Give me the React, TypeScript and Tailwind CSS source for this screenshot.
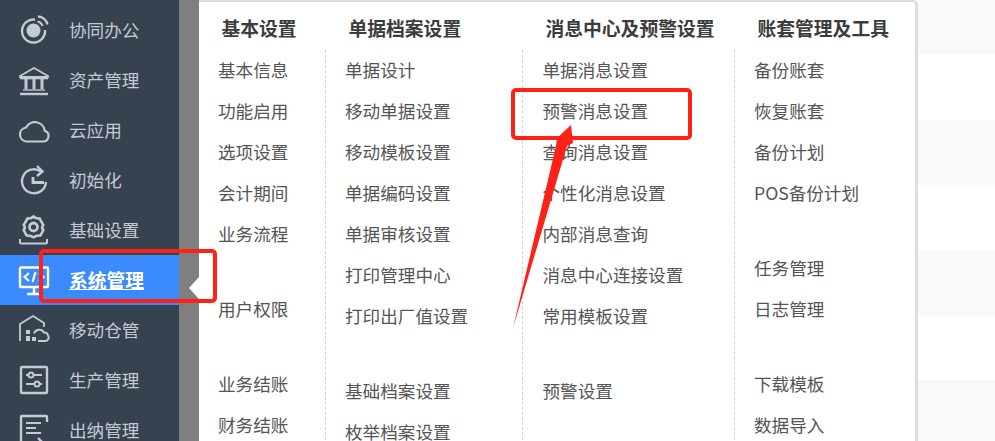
import React from 'react';

const FONT = "font-['Microsoft_YaHei','Noto_Sans_CJK_SC','Noto_Sans',sans-serif]";

const IconBox: React.FC<{ children: React.ReactNode }> = ({ children }) => (
  <svg viewBox="0 0 32 32" fill="none" stroke="currentColor" strokeWidth="2" className="w-8 h-8 shrink-0">
    {children}
  </svg>
);

const icons: Record<string, React.ReactNode> = {
  office: (
    <IconBox>
      <path d="M17 5.600A11.500 11.500 0 1 0 27 16" strokeWidth="2.400" />
      <circle cx="15.500" cy="16.500" r="7" fill="currentColor" stroke="none" />
      <path d="M20 2.500a10.500 10.500 0 0 1 9.500 8" strokeWidth="2.400" />
      <path d="M19.500 7.500a6 6 0 0 1 5 4.500" strokeWidth="2.200" />
    </IconBox>
  ),
  bank: (
    <IconBox>
      <path d="M2 12 16 4l14 8v1H2z" strokeWidth="1.800" />
      <path d="M2 14.500h28" strokeWidth="1.600" />
      <path d="M8 15v10M16 15v10M24 15v10" strokeWidth="3" />
      <path d="M5 26h22" strokeWidth="1.400" />
      <path d="M2 30h28" strokeWidth="2.400" />
    </IconBox>
  ),
  cloud: (
    <IconBox>
      <path d="M8 27.500h17a5.500 5.500 0 0 0 1.800-10.700A10 10 0 0 0 8 13.500a7 7 0 0 0-6 7 7 7 0 0 0 6 7z" strokeWidth="2.200" />
    </IconBox>
  ),
  init: (
    <IconBox>
      <path d="M23 7.500A12 12 0 1 0 28 18" strokeWidth="2.400" />
      <path d="M19 2l5.500 5.500L19 12" strokeWidth="2.400" />
      <path d="M15 13v5.500h11" strokeWidth="2.800" />
    </IconBox>
  ),
  base: (
    <IconBox>
      <path d="M15.500 2.500c1.800 1.800 3.200 2.300 6 2l3.800 6.500c-1.600 1.800-1.600 3.200 0 5l-2.800 5.500c-2.600-.2-4.800.2-7 1.800-2.200-1.600-4.400-2-7-1.800l-2.800-5.500c1.600-1.800 1.600-3.200 0-5l3.800-6.500c2.800.3 4.200-.2 6-2z" strokeWidth="2.600" />
      <circle cx="15.500" cy="13" r="4" strokeWidth="2.800" />
      <path d="M2 25v3.500a1 1 0 0 0 1 1h25a1 1 0 0 0 1-1V25" strokeWidth="2" />
    </IconBox>
  ),
  system: (
    <IconBox>
      <rect x="2" y="3.500" width="28" height="19.500" rx="1" strokeWidth="2.400" />
      <path d="M16 23v6M9 30h14" strokeWidth="2.400" />
      <path d="M11 9l-4.500 4 4.500 4M21 9l4.500 4-4.500 4M17.500 8l-3 10" strokeWidth="2.200" />
    </IconBox>
  ),
  warehouse: (
    <IconBox>
      <path d="M2 27V10L15 2l11 7v4" strokeWidth="1.800" />
      <path d="M8 16h4v4H8zM8 22h4v5H8zM14 23h4v4h-4z" fill="currentColor" stroke="none" />
      <path d="M20 27h7a3.500 3.500 0 0 0 3-5.500 3.500 3.500 0 0 0-4-3 5.500 5.500 0 0 0-10 1" strokeWidth="2" />
    </IconBox>
  ),
  production: (
    <IconBox>
      <rect x="3" y="3" width="26" height="26" rx="1" strokeWidth="2.400" />
      <path d="M8 11h16M8 20h16" strokeWidth="2" />
      <circle cx="13" cy="11" r="2.500" fill="#374250" strokeWidth="2" />
      <circle cx="19" cy="20" r="2.500" fill="#374250" strokeWidth="2" />
    </IconBox>
  ),
  cash: (
    <IconBox>
      <path d="M20 29H4a1 1 0 0 1-1-1V3a1 1 0 0 1 1-1h24a1 1 0 0 1 1 1v5" strokeWidth="2.400" />
      <path d="M8 9h15M8 14h10M8 19h15" strokeWidth="2.200" />
      <path d="M20 24l5 5" strokeWidth="2.400" />
    </IconBox>
  ),
};

const navItems = [
  { label: '协同办公', icon: 'office' },
  { label: '资产管理', icon: 'bank' },
  { label: '云应用', icon: 'cloud' },
  { label: '初始化', icon: 'init' },
  { label: '基础设置', icon: 'base' },
  { label: '系统管理', icon: 'system', active: true },
  { label: '移动仓管', icon: 'warehouse' },
  { label: '生产管理', icon: 'production' },
  { label: '出纳管理', icon: 'cash' },
];

const columns = [
  {
    title: '基本设置',
    width: 'w-[126px]',
    titleClass: 'pl-[22.5px]',
    listClass: 'pl-[19px]',
    dashed: false,
    groups: [
      ['基本信息', '功能启用', '选项设置', '会计期间', '业务流程'],
      ['用户权限'],
      ['业务结账', '财务结账'],
    ],
  },
  {
    title: '单据档案设置',
    width: 'w-[197px]',
    titleClass: 'pl-[23.5px]',
    listClass: 'pl-[19px]',
    dashed: true,
    groups: [
      ['单据设计', '移动单据设置', '移动模板设置', '单据编码设置', '单据审核设置', '打印管理中心', '打印出厂值设置'],
      ['基础档案设置', '枚举档案设置'],
    ],
  },
  {
    title: '消息中心及预警设置',
    width: 'w-[212px]',
    titleClass: 'pl-[23.5px]',
    listClass: 'pl-[19.5px]',
    dashed: true,
    groups: [
      ['单据消息设置', '预警消息设置', '查询消息设置', '个性化消息设置', '内部消息查询', '消息中心连接设置', '常用模板设置'],
      ['预警设置'],
    ],
  },
  {
    title: '账套管理及工具',
    width: 'w-[181px]',
    titleClass: 'pl-[23.5px]',
    listClass: 'pl-[19px]',
    dashed: true,
    groups: [
      ['备份账套', '恢复账套', '备份计划', 'POS备份计划'],
      ['任务管理', '日志管理'],
      ['下载模板', '数据导入'],
    ],
  },
];

const stripes = [
  { h: 'h-[55px]', bg: 'bg-[#f9f9f9]' },
  { h: 'h-[65px]', bg: 'bg-white' },
  { h: 'h-[65px]', bg: 'bg-[#f9f9f9]' },
  { h: 'h-[65px]', bg: 'bg-white' },
  { h: 'h-[65px]', bg: 'bg-[#f9f9f9]' },
  { h: 'h-[65px]', bg: 'bg-white' },
  { h: 'h-[61px]', bg: 'bg-[#f9f9f9]' },
];

export default function App() {
  return (
    <div className={`relative flex w-[995px] h-[441px] overflow-hidden bg-white ${FONT}`}>
      <aside className="w-[179px] shrink-0 bg-[#374250] pt-[5px]">
        {navItems.map((item) => (
          <div
            key={item.label}
            className={`flex items-center h-[50px] pl-[18px] gap-[19px] text-[17.6px] ${
              item.active ? 'bg-[#3b8bff] text-white' : 'text-[#c5cad3]'
            }`}
          >
            {icons[item.icon]}
            <span className={item.active ? 'font-bold underline text-[18.8px]' : ''}>{item.label}</span>
          </div>
        ))}
      </aside>

      <div className="relative w-[20px] shrink-0 bg-[#7f7f7f]">
        <div className="absolute left-[10px] top-[277px] w-0 h-0 border-y-[11px] border-y-transparent border-r-[10px] border-r-white" />
      </div>

      <section className="flex w-[719px] shrink-0 bg-white border-t-2 border-r-[3px] border-[#dddddd] rounded-tr-[5px]">
        {columns.map((col) => (
          <div key={col.title} className={`${col.width} shrink-0`}>
            <h3 className={`h-[55px] flex items-center pb-[2px] text-[18.8px] font-bold text-[#3c3c3c] whitespace-nowrap ${col.titleClass}`}>
              {col.title}
            </h3>
            <div className={`h-[400px] ${col.listClass} ${col.dashed ? 'border-l border-dashed border-[#d4d4d4]' : ''}`}>
              <div className="flex flex-col gap-[34px] -mt-[7px]">
                {col.groups.map((group, i) => (
                  <ul key={i}>
                    {group.map((name) => (
                      <li key={name} className="h-[41px] flex items-center text-[17.6px] text-[#555555] whitespace-nowrap">
                        {name}
                      </li>
                    ))}
                  </ul>
                ))}
              </div>
            </div>
          </div>
        ))}
      </section>

      <div className="flex-1 flex flex-col">
        {stripes.map((s, i) => (
          <div key={i} className={`${s.h} ${s.bg}`} />
        ))}
      </div>

      {/* red annotations drawn over the screenshot */}
      <div className="absolute left-[39px] top-[249px] w-[178px] h-[54px] border-4 border-[#ff2016] rounded-[5px]" />
      <div className="absolute left-[511px] top-[88px] w-[181px] h-[52px] border-4 border-[#ff2016] rounded-[5px]" />
      <svg className="absolute left-0 top-0 w-[995px] h-[441px] pointer-events-none" viewBox="0 0 995 441">
        <polygon points="513,328 556,146 557,138 571,125 573,143 567,146" fill="#ff2016" />
      </svg>
    </div>
  );
}
